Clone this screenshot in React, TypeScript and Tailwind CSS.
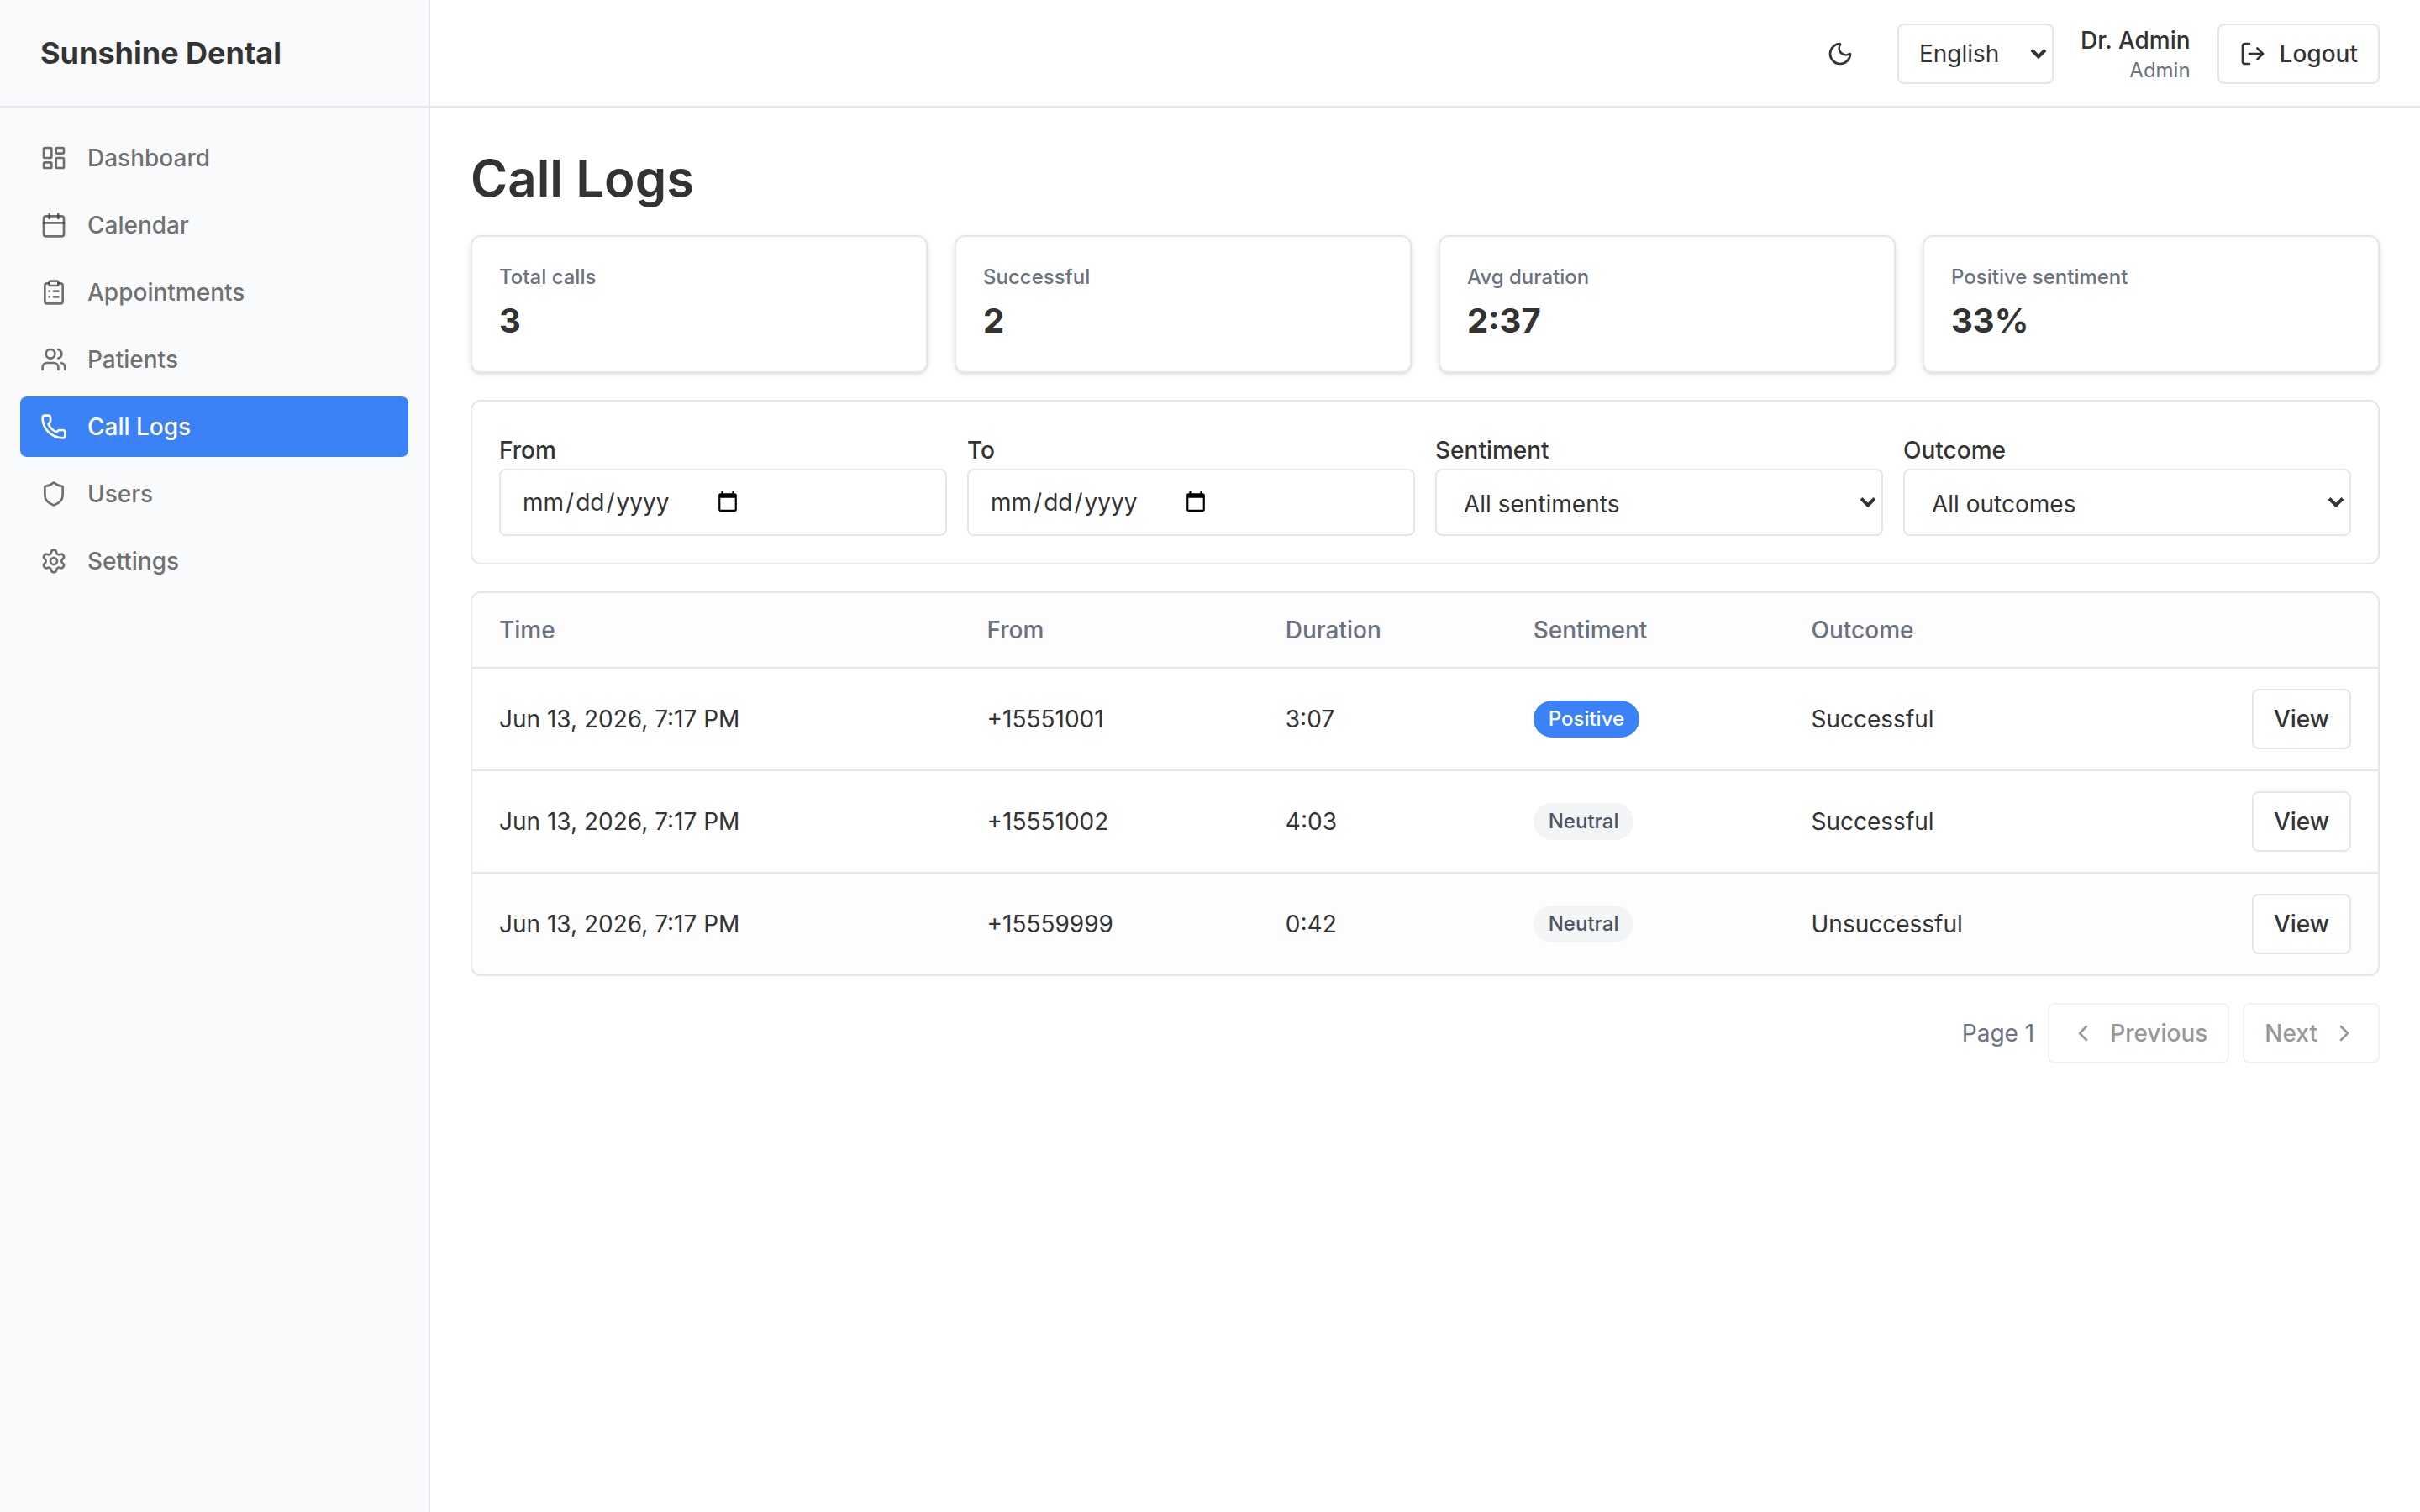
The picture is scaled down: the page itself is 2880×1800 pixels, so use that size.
import React from "react";
import {
  Calendar,
  ChevronLeft,
  ChevronRight,
  ClipboardList,
  LayoutDashboard,
  LogOut,
  Moon,
  Phone,
  Settings,
  Shield,
  Users,
} from "lucide-react";

const navItems = [
  { label: "Dashboard", icon: LayoutDashboard },
  { label: "Calendar", icon: Calendar },
  { label: "Appointments", icon: ClipboardList },
  { label: "Patients", icon: Users },
  { label: "Call Logs", icon: Phone, active: true },
  { label: "Users", icon: Shield },
  { label: "Settings", icon: Settings },
];

const stats = [
  { label: "Total calls", value: "3" },
  { label: "Successful", value: "2" },
  { label: "Avg duration", value: "2:37" },
  { label: "Positive sentiment", value: "33%" },
];

const calls = [
  { time: "Jun 13, 2026, 7:17 PM", from: "+15551001", duration: "3:07", sentiment: "Positive", outcome: "Successful" },
  { time: "Jun 13, 2026, 7:17 PM", from: "+15551002", duration: "4:03", sentiment: "Neutral", outcome: "Successful" },
  { time: "Jun 13, 2026, 7:17 PM", from: "+15559999", duration: "0:42", sentiment: "Neutral", outcome: "Unsuccessful" },
];

const outlineButton =
  "inline-flex h-18 items-center justify-center gap-4 rounded-lg border-2 border-[#e5e6eb] bg-white px-6 font-medium text-[#333333] disabled:opacity-50";

function SelectArrow() {
  return (
    <svg
      viewBox="0 0 20 14"
      className="pointer-events-none absolute top-1/2 right-2 h-3.5 w-5 -translate-y-1/2"
      fill="none"
      stroke="currentColor"
      strokeWidth="4"
      aria-hidden="true"
    >
      <path d="M2 2.5 10 10.5 18 2.5" />
    </svg>
  );
}

function Field({ id, label, children }: { id: string; label: string; children: React.ReactNode }) {
  return (
    <div className="min-w-0 flex-1">
      <div className="flex h-12 items-end pb-0.5">
        <label htmlFor={id} className="font-medium">
          {label}
        </label>
      </div>
      {children}
    </div>
  );
}

function DateField({ id, label }: { id: string; label: string }) {
  return (
    <Field id={id} label={label}>
      <input
        id={id}
        type="date"
        className="flex h-20 w-full rounded-lg border-2 border-[#e5e6eb] bg-white px-6 py-4 text-[28px] leading-10 [&::-webkit-calendar-picker-indicator]:ml-[22px] [&::-webkit-calendar-picker-indicator]:size-7 [&::-webkit-calendar-picker-indicator]:p-0 [&::-webkit-datetime-edit-day-field]:px-0.5 [&::-webkit-datetime-edit-month-field]:px-0.5 [&::-webkit-datetime-edit-year-field]:px-0.5"
      />
    </Field>
  );
}

function SelectField({ id, label, option }: { id: string; label: string; option: string }) {
  return (
    <Field id={id} label={label}>
      <div className="relative">
        <select
          id={id}
          className="block h-20 w-full appearance-none rounded-lg border-2 border-[#e5e6eb] bg-white px-8 pt-1 text-[28px] leading-10"
        >
          <option>{option}</option>
        </select>
        <SelectArrow />
      </div>
    </Field>
  );
}

export default function App() {
  return (
    <div className="flex min-h-screen bg-white font-['Inter',sans-serif] text-[28px] leading-10 text-[#333333]">
      <aside className="w-128 shrink-0 border-r-2 border-[#e5e7eb] bg-[#f9fafb]">
        <div className="flex h-32 items-center border-b-2 border-[#e5e7eb] px-12">
          <span className="text-4xl font-bold">Sunshine Dental</span>
        </div>
        <nav className="flex flex-col gap-2 p-6">
          {navItems.map(({ label, icon: Icon, active }) => (
            <a
              key={label}
              href="#"
              aria-current={active ? "page" : undefined}
              className={
                active
                  ? "flex h-18 items-center gap-6 rounded-lg bg-[#3b82f6] px-6 font-medium text-white"
                  : "flex h-18 items-center gap-6 rounded-lg px-6 font-medium text-[#333333]/70"
              }
            >
              <Icon className="size-8" />
              {label}
            </a>
          ))}
        </nav>
      </aside>

      <div className="flex min-w-0 flex-1 flex-col">
        <header className="flex h-32 items-center justify-end gap-8 border-b-2 border-[#e5e6eb] px-12 pt-0.5">
          <button type="button" aria-label="Toggle theme" className="flex size-18 items-center justify-center rounded-lg">
            <Moon className="size-8" />
          </button>
          <div className="relative">
            <select
              aria-label="Language"
              className="block h-18 w-[186px] appearance-none rounded-lg border-2 border-[#e5e6eb] bg-white px-6"
            >
              <option>English</option>
            </select>
            <SelectArrow />
          </div>
          <div className="text-right">
            <div className="font-medium">Dr. Admin</div>
            <div className="text-2xl text-[#6b7280]">Admin</div>
          </div>
          <button type="button" className={outlineButton}>
            <LogOut className="size-8" />
            Logout
          </button>
        </header>

        <main className="flex flex-col gap-8 p-12">
          <h1 className="text-6xl leading-18 font-semibold">Call Logs</h1>

          <div className="grid grid-cols-4 gap-8">
            {stats.map((stat) => (
              <div
                key={stat.label}
                className="flex flex-col gap-2 rounded-xl border-2 border-[#e5e6eb] bg-white p-8 shadow-[0_2px_6px_rgba(0,0,0,0.1),0_2px_4px_-2px_rgba(0,0,0,0.1)]"
              >
                <div className="text-2xl font-medium text-[#6b7280]">{stat.label}</div>
                <div className="text-[40px] leading-14 font-bold">{stat.value}</div>
              </div>
            ))}
          </div>

          <div className="flex gap-6 rounded-xl border-2 border-[#e5e6eb] bg-white p-8">
            <DateField id="from" label="From" />
            <DateField id="to" label="To" />
            <SelectField id="sentiment" label="Sentiment" option="All sentiments" />
            <SelectField id="outcome" label="Outcome" option="All outcomes" />
          </div>

          <div className="overflow-hidden rounded-xl border-2 border-[#e5e6eb]">
            <table className="w-full text-left">
              <thead>
                <tr className="h-[89px] border-b-2 border-[#e5e6eb] bg-[#fdfdfd] text-[#6b7280]">
                  <th className="px-8 font-medium">Time</th>
                  <th className="px-8 font-medium">From</th>
                  <th className="px-8 font-medium">Duration</th>
                  <th className="px-8 font-medium">Sentiment</th>
                  <th className="px-8 font-medium">Outcome</th>
                  <th className="px-8" aria-label="Actions" />
                </tr>
              </thead>
              <tbody>
                {calls.map((call) => (
                  <tr key={call.from} className="border-b-2 border-[#e5e6eb] last:border-b-0 last:bg-[#fdfdfd]">
                    <td className="px-8 py-6">{call.time}</td>
                    <td className="px-8 py-6">{call.from}</td>
                    <td className="px-8 py-6">{call.duration}</td>
                    <td className="px-8 py-6">
                      <span
                        className={
                          call.sentiment === "Positive"
                            ? "flex h-11 w-fit items-center rounded-full bg-[#3b82f6] px-[18px] text-2xl font-medium text-white"
                            : "flex h-11 w-fit items-center rounded-full bg-[#f3f4f6] px-[18px] text-2xl font-medium text-[#4b5563]"
                        }
                      >
                        {call.sentiment}
                      </span>
                    </td>
                    <td className="px-8 py-6">{call.outcome}</td>
                    <td className="px-8 py-6 text-right">
                      <button type="button" className={outlineButton + " align-top"}>
                        View
                      </button>
                    </td>
                  </tr>
                ))}
              </tbody>
            </table>
          </div>

          <div className="flex items-center justify-end gap-4">
            <span className="text-[#6b7280]">Page 1</span>
            <button type="button" disabled className={outlineButton}>
              <ChevronLeft className="size-8" />
              Previous
            </button>
            <button type="button" disabled className={outlineButton}>
              Next
              <ChevronRight className="size-8" />
            </button>
          </div>
        </main>
      </div>
    </div>
  );
}
